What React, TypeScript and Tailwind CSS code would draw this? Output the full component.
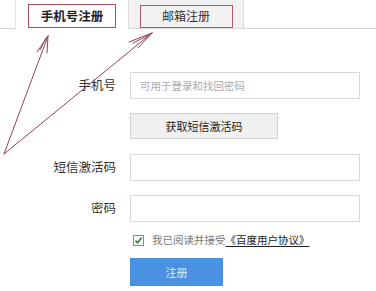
import React from 'react'

const font = { fontFamily: '"Noto Sans CJK SC", "Noto Sans", sans-serif' }

function Annotations() {
    return (
        <svg
            className="absolute left-0 top-0 pointer-events-none"
            width={376}
            height={291}
            viewBox="0 0 376 291"
            fill="none"
            stroke="#8e4456"
            strokeWidth={1}
            strokeLinecap="round"
        >
            {/* arrow to phone tab */}
            <path d="M4 154 L48 36" />
            <path d="M48 36 L37 52 M48 36 L47 53 M46 38 L40 50" />
            {/* arrow to email tab */}
            <path d="M4 154 L152 33" />
            <path d="M152 33 L129 42 M152 33 L138 48 M149 35 L133 43" />
        </svg>
    )
}

function Field({ label, placeholder }: { label: string; placeholder?: string }) {
    return (
        <div className="flex items-center">
            <div className="w-[116px] text-right text-[12.5px] text-[#333]">{label}</div>
            <div className="ml-[14px] w-[230px] h-[27px] border border-[#d9d9d9] bg-white flex items-center px-[9px] text-[10.5px] text-[#aaa]">
                {placeholder}
            </div>
        </div>
    )
}

export default function App() {
    return (
        <div className="relative w-[376px] h-[291px] bg-white overflow-hidden" style={font}>
            {/* tabs */}
            <div className="flex h-[29px]">
                <div className="w-[15px] border-b border-[#d6d6d6]" />
                <div className="w-[113px] border-l border-[#e2e2e2] flex items-center justify-center">
                    <div className="w-[88px] h-[24px] mt-[3px] border border-[#a8505f] flex items-center justify-center text-[12.5px] font-bold text-[#222]">
                        手机号注册
                    </div>
                </div>
                <div className="w-[116px] bg-[#f2f2f2] border-l border-r border-b border-[#dcdcdc] flex items-center justify-center">
                    <div className="w-[93px] h-[23px] mt-[4px] border border-[#b05a68] flex items-center justify-center text-[12px] text-[#333]">
                        邮箱注册
                    </div>
                </div>
                <div className="flex-1 border-b border-[#d6d6d6]" />
            </div>

            {/* form */}
            <div className="flex flex-col pt-[43px]">
                <Field label="手机号" placeholder="可用于登录和找回密码" />
                <div className="mt-[14px] ml-[130px] w-[148px] h-[26px] bg-[#f0f0f0] border border-[#d0d0d0] flex items-center justify-center text-[11px] text-[#222]">
                    获取短信激活码
                </div>
                <div className="mt-[15px]">
                    <Field label="短信激活码" />
                </div>
                <div className="mt-[14px]">
                    <Field label="密码" />
                </div>
                <div className="mt-[11px] ml-[133px] flex items-center h-[14px]">
                    <div className="w-[11px] h-[11px] border border-[#8a8a8a] bg-white flex items-center justify-center">
                        <svg width="9" height="9" viewBox="0 0 9 9" fill="none" stroke="#2f7a3a" strokeWidth={1.6}>
                            <path d="M1.5 4.5 L3.6 6.8 L7.6 1.8" />
                        </svg>
                    </div>
                    <span className="ml-[8px] text-[10.5px] text-[#777]">我已阅读并接受</span>
                    <span className="text-[10.5px] text-[#222] underline underline-offset-2">《百度用户协议》</span>
                </div>
                <div className="mt-[11px] ml-[130px] w-[93px] h-[28px] bg-[#4a92df] flex items-center justify-center text-[11px] text-[#dfeaf8]">
                    注册
                </div>
            </div>

            <Annotations />
        </div>
    )
}
